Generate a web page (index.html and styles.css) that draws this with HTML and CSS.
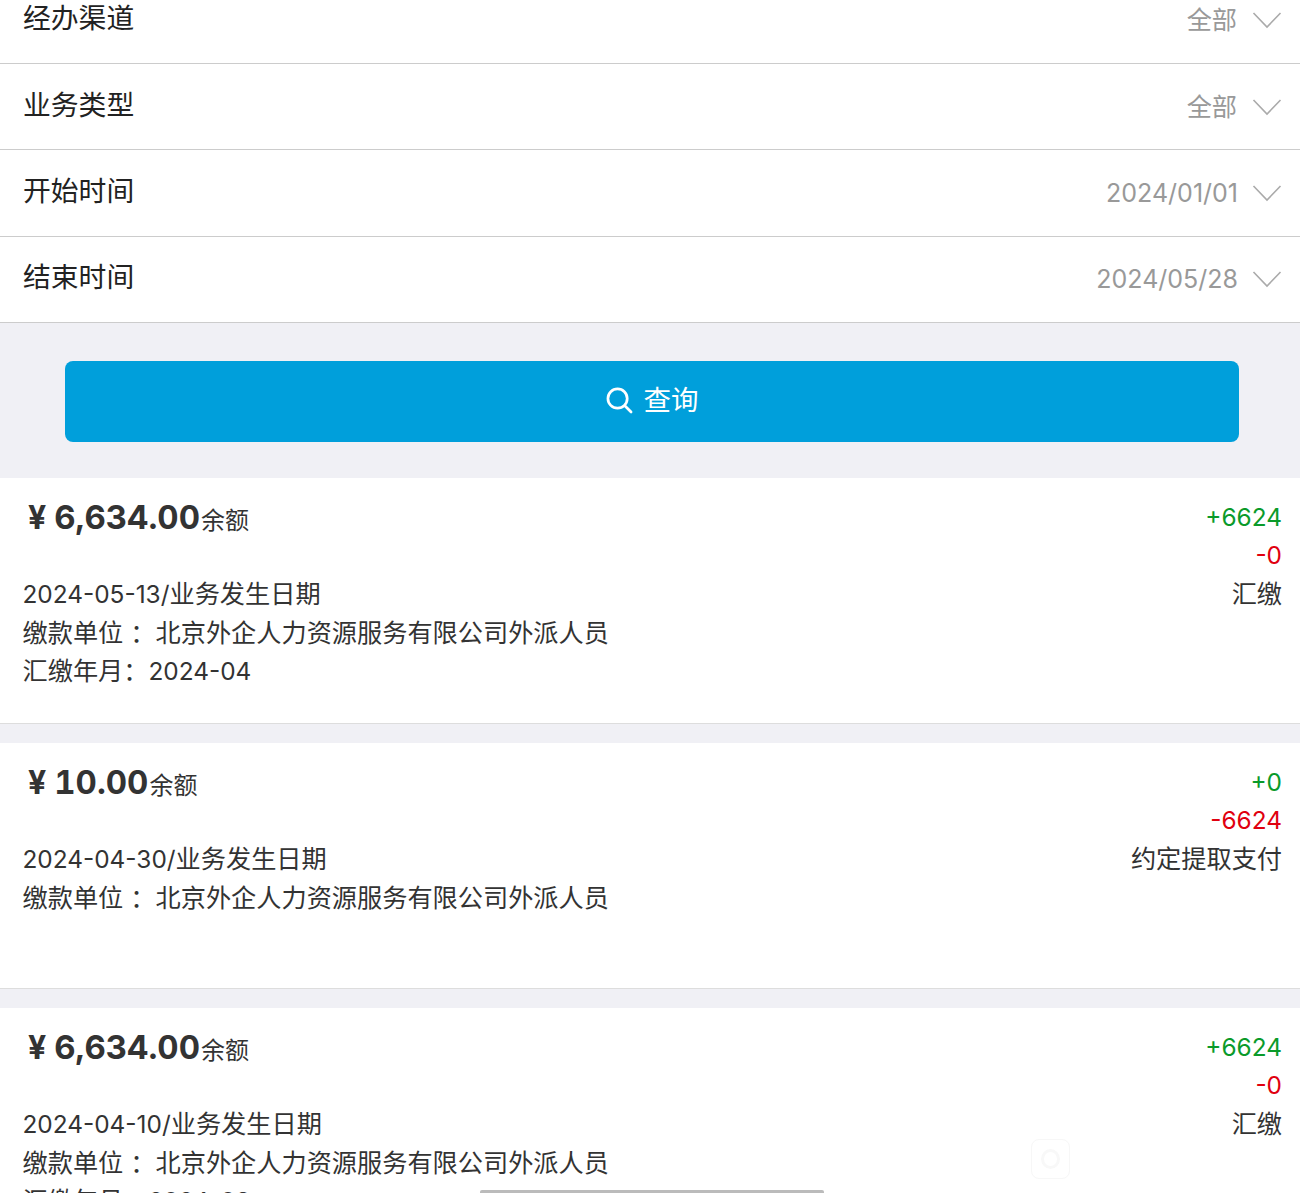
FILE: index.html
```html
<!DOCTYPE html>
<html lang="zh-CN">
<head>
<meta charset="utf-8">
<title>明细查询</title>
<link rel="stylesheet" href="styles.css">
</head>
<body>
<div class="viewport">
  <div class="content">
    <section class="filters">
      <div class="row"><span class="label">经办渠道</span><span class="value">全部</span><svg class="chev" viewBox="0 0 30 18"><path d="M1.5 2 15 16 28.5 2"/></svg></div>
      <div class="row"><span class="label">业务类型</span><span class="value">全部</span><svg class="chev" viewBox="0 0 30 18"><path d="M1.5 2 15 16 28.5 2"/></svg></div>
      <div class="row"><span class="label">开始时间</span><span class="value value-date">2024/01/01</span><svg class="chev" viewBox="0 0 30 18"><path d="M1.5 2 15 16 28.5 2"/></svg></div>
      <div class="row"><span class="label">结束时间</span><span class="value value-date">2024/05/28</span><svg class="chev" viewBox="0 0 30 18"><path d="M1.5 2 15 16 28.5 2"/></svg></div>
    </section>
    <div class="action">
      <button class="query" type="button">
        <svg class="search" viewBox="0 0 28 28"><circle cx="12" cy="12" r="10"/><path d="M19.5 19.5 26 26"/></svg>
        <span class="query-text">查询</span>
      </button>
    </div>
    <section class="list">
      <article class="card">
        <div class="main">
          <div class="amount"><b>¥</b><strong>6,634.00</strong><span>余额</span></div>
          <p><span class="num">2024-05-13/</span>业务发生日期</p>
          <p>缴款单位 ：北京外企人力资源服务有限公司外派人员</p>
          <p>汇缴年月：<span class="num">2024-04</span></p>
        </div>
        <div class="side"><p class="plus num">+6624</p><p class="minus num">-0</p><p>汇缴</p></div>
      </article>
      <article class="card">
        <div class="main">
          <div class="amount"><b>¥</b><strong>10.00</strong><span>余额</span></div>
          <p><span class="num">2024-04-30/</span>业务发生日期</p>
          <p>缴款单位 ：北京外企人力资源服务有限公司外派人员</p>
        </div>
        <div class="side"><p class="plus num">+0</p><p class="minus num">-6624</p><p>约定提取支付</p></div>
      </article>
      <article class="card">
        <div class="main">
          <div class="amount"><b>¥</b><strong>6,634.00</strong><span>余额</span></div>
          <p><span class="num">2024-04-10/</span>业务发生日期</p>
          <p>缴款单位 ：北京外企人力资源服务有限公司外派人员</p>
          <p>汇缴年月：<span class="num">2024-03</span></p>
        </div>
        <div class="side"><p class="plus num">+6624</p><p class="minus num">-0</p><p>汇缴</p></div>
      </article>
    </section>
  </div>
  <div class="watermark"><div class="watermark-dot"></div></div>
  <div class="home-bar"></div>
</div>
</body>
</html>
```
FILE: styles.css
```css
* { box-sizing: border-box; }
html, body { margin: 0; padding: 0; height: 100%; }
body {
  background: #f0f0f5;
  color: #333;
  font-family: Inter, "Noto Sans CJK SC", "Liberation Sans", sans-serif;
}
.viewport { position: relative; height: 1193px; overflow: hidden; }
.content { margin-top: -22.3px; }
.filters { background: #fff; }
.row {
  display: flex;
  align-items: center;
  height: 86.33px;
  padding: 0 18px 0 23px;
  border-bottom: 1px solid #ccc;
}
.label { flex: 1; font-size: 27.8px; color: #222; position: relative; top: -4px; }
.value { font-size: 25.2px; color: #999; margin-right: 15px; position: relative; top: -2px; }
.value-date { font-size: 25px; margin-right: 14px; top: 0; }
.chev { width: 30px; height: 18px; flex: none; fill: none; stroke: #aaa; stroke-width: 1.6; }
.action { padding: 38px 61px 36px 65px; }
.query {
  display: flex;
  align-items: center;
  justify-content: center;
  gap: 11px;
  width: 100%;
  height: 81px;
  border: 0;
  border-radius: 8px;
  background: #009fdb;
  color: #fff;
  font: inherit;
  font-size: 27.5px;
}
.query-text { position: relative; top: -4px; }
.search { width: 27px; height: 27px; margin-bottom: 2px; fill: none; stroke: #fff; stroke-width: 2.8; stroke-linecap: round; }
.list { display: flex; flex-direction: column; gap: 19px; }
.card {
  display: flex;
  justify-content: space-between;
  height: 246px;
  padding: 21px 18px 0 22.5px;
  background: #fff;
  border-bottom: 1px solid #ddd;
}
.card p { margin: 0; font-size: 25.2px; line-height: 38.5px; white-space: nowrap; }
.card .num { font-size: 24.4px; }
.amount { display: flex; align-items: baseline; height: 76px; padding: 0 0 0 5.5px; line-height: 37px; }
.amount b { font-size: 32px; font-weight: 700; margin-right: 8px; }
.amount strong { font-size: 33px; font-weight: 700; font-variant-numeric: tabular-nums; }
.amount span { font-size: 24px; margin-left: 1px; }
.side { text-align: right; margin-top: -1px; }
.card .side p { line-height: 38.3px; }
.plus { color: #0a9a2a; }
.minus { color: #e0000f; }
.watermark {
  position: absolute;
  left: 1031px;
  top: 1139px;
  width: 39px;
  height: 40px;
  padding: 9px;
  border: 1px solid #f7f7f7;
  border-radius: 8px;
}
.watermark-dot { width: 100%; height: 100%; border: 3px solid #f8f8f8; border-radius: 50%; }
.home-bar {
  position: absolute;
  left: 480px;
  bottom: 0;
  width: 344px;
  height: 3px;
  background: #bbb;
  border-radius: 2px 2px 0 0;
}
```
